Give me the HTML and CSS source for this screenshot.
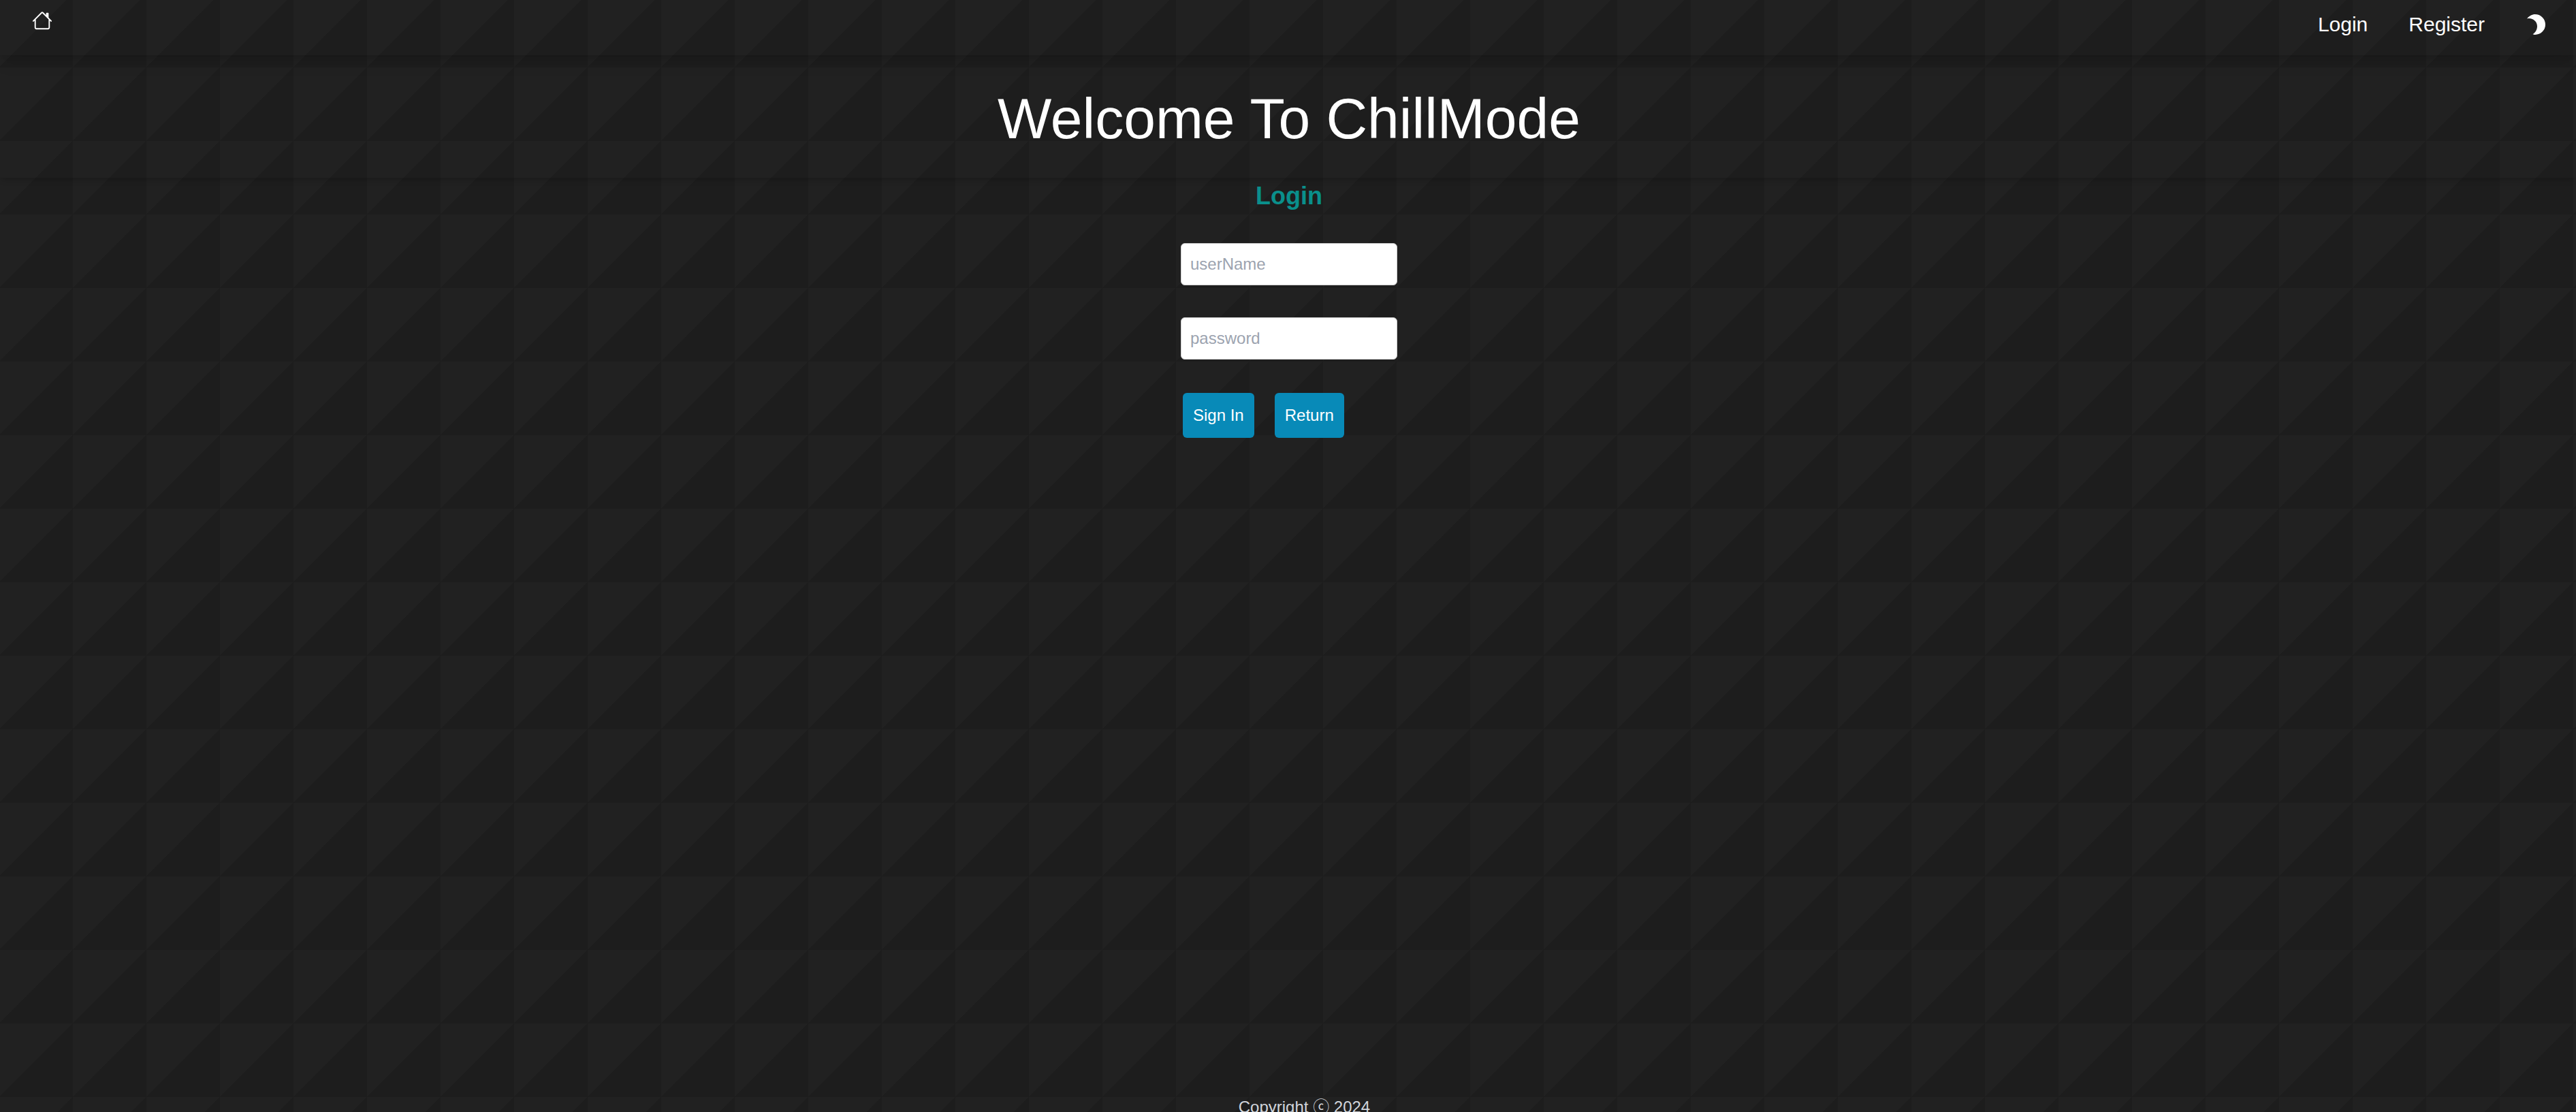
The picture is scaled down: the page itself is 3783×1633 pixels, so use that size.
FILE: index.html
```html
<!DOCTYPE html>
<html lang="en">
<head>
<meta charset="utf-8">
<meta name="viewport" content="width=device-width, initial-scale=1">
<title>ChillMode</title>
<link rel="stylesheet" href="styles.css">
</head>
<body>
<header class="topbar">
  <a class="home" href="#" aria-label="Home">
    <svg class="icon" viewBox="0 0 16 16" fill="currentColor" aria-hidden="true"><path d="M8.707 1.5a1 1 0 0 0-1.414 0L.646 8.146a.5.5 0 0 0 .708.708L2 8.207V13.5A1.5 1.5 0 0 0 3.5 15h9a1.5 1.5 0 0 0 1.5-1.5V8.207l.646.647a.5.5 0 0 0 .708-.708L13 5.793V2.5a.5.5 0 0 0-.5-.5h-1a.5.5 0 0 0-.5.5v1.293zM13 7.207V13.5a.5.5 0 0 1-.5.5h-9a.5.5 0 0 1-.5-.5V7.207l5-5z"/></svg>
  </a>
  <nav class="links">
    <a class="link" href="#">Login</a>
    <a class="link" href="#">Register</a>
    <button class="theme" type="button" aria-label="Toggle theme">
      <svg class="icon" viewBox="0 0 30 30" fill="currentColor" aria-hidden="true"><path d="M2 6.500C5 2.500 9.500 0 14 0a15 15 0 0 1 0 30C12.500 30 11.500 29.800 10.500 29.300C14.500 26.500 17 22.500 17 17.500C17 10.500 10 4.500 2 6.500z"/></svg>
    </button>
  </nav>
</header>
<div class="hero"><h1 class="title">Welcome To ChillMode</h1></div>
<main class="main">
  <h2 class="subtitle">Login</h2>
  <form class="form">
    <input class="field" type="text" placeholder="userName" aria-label="userName">
    <input class="field" type="password" placeholder="password" aria-label="password">
    <div class="actions">
      <button class="button" type="button">Sign In</button>
      <button class="button" type="button">Return</button>
    </div>
  </form>
</main>
<footer class="footer">Copyright ⓒ 2024</footer>
</body>
</html>
```
FILE: styles.css
```css
* {
  box-sizing: border-box;
}

body {
  display: flex;
  flex-direction: column;
  height: 100vh;
  margin: 0;
  overflow: hidden;
  color: #fff;
  font-family: "Liberation Sans", Arial, "Noto Sans CJK JP", sans-serif;
  font-size: 24px;
  line-height: 36px;
  background-color: #1d1d1d;
  background-image: linear-gradient(135deg, #212121 50%, #1d1d1d 50%);
  background-size: 108px 108px;
  background-position: -1px -9px;
}

a {
  color: inherit;
  text-decoration: none;
}

button {
  border: 0;
  color: inherit;
  font: inherit;
  cursor: pointer;
}

.topbar {
  display: flex;
  justify-content: space-between;
  align-items: flex-start;
  height: 81px;
  padding: 15px 44px 0 47px;
  box-shadow: 0 15px 23px -5px rgba(0, 0, 0, .1), 0 6px 9px -6px rgba(0, 0, 0, .1);
}

.icon {
  display: block;
  width: 30px;
  height: 30px;
}

.links {
  display: flex;
  align-items: center;
  gap: 60px;
  font-size: 30px;
  line-height: 42px;
}

.theme {
  padding: 0;
  background: none;
}

.hero {
  height: 180px;
  padding: 37px 0 0 3px;
  box-shadow: 0 6px 9px -3px rgba(0, 0, 0, .2);
  text-align: center;
}

.title {
  margin: 0;
  font-size: 84px;
  font-weight: 400;
  line-height: 112px;
}

.main {
  display: flex;
  flex: 1;
  flex-direction: column;
  align-items: center;
  padding-left: 3px;
}

.subtitle {
  margin: 6px 0 48px;
  color: #0a8f8b;
  font-size: 36px;
  line-height: 42px;
}

.form {
  display: flex;
  flex-direction: column;
  gap: 47px;
  width: 318px;
}

.field {
  width: 100%;
  height: 62px;
  padding: 0 13px;
  border: 1px solid #ccc;
  border-radius: 6px;
  background: #fff;
  color: #111;
  font: inherit;
}

.field::placeholder {
  color: #9ca3af;
}

.actions {
  display: flex;
  gap: 30px;
  padding: 2px 3px;
}

.button {
  padding: 15px;
  border-radius: 6px;
  background: #088ab8;
}

.footer {
  height: 25px;
  padding-left: 48px;
  color: #d1d5db;
  text-align: center;
}
```
